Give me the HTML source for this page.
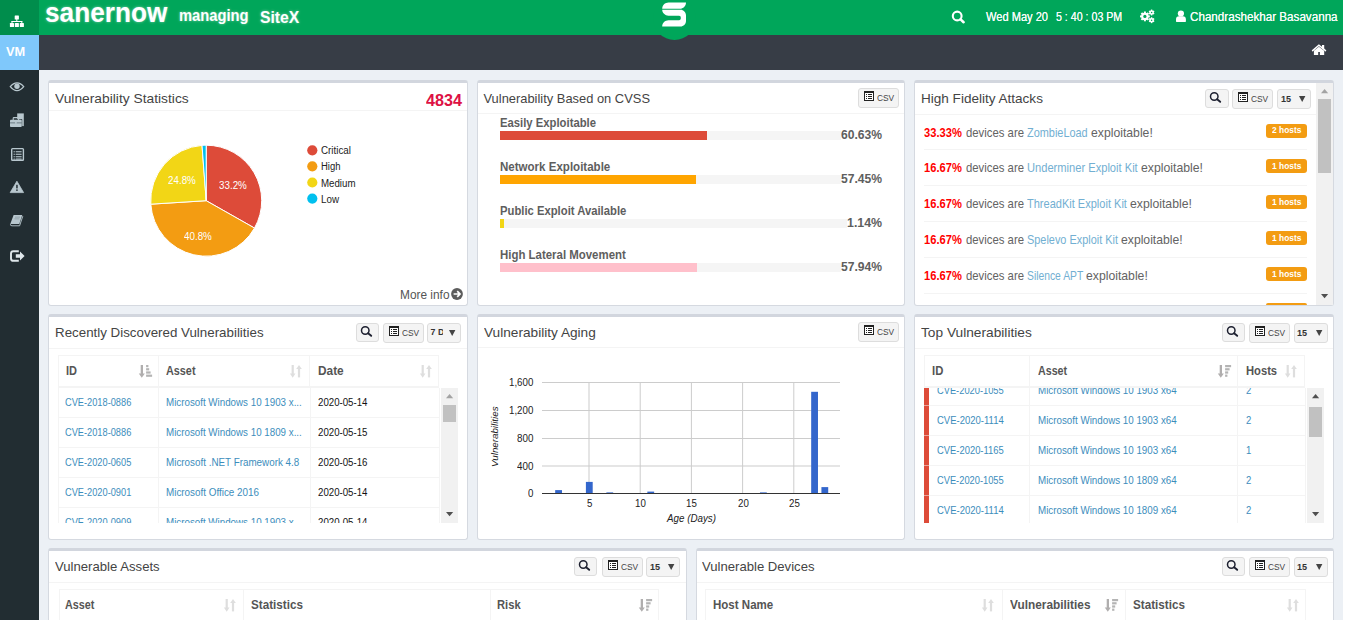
<!DOCTYPE html>
<html lang="en"><head><meta charset="utf-8"><title>SanerNow - Vulnerability Management</title>
<style>
html,body{margin:0;padding:0;}
body{width:1345px;height:620px;overflow:hidden;background:#fff;position:relative;font-family:"Liberation Sans",sans-serif;}
div,span.t,svg{position:absolute;box-sizing:border-box;}
svg{overflow:visible;}
.t{white-space:nowrap;line-height:1;transform-origin:0 0;display:block;}
.box{background:#fff;border:1px solid #d5d9e0;border-top:3px solid #d2d6de;border-radius:3px;}
.btn{background:#f4f4f4;border:1px solid #ddd;border-radius:3px;}
.clip{overflow:hidden;}
</style></head>
<body>
<div style="left:0px;top:0px;width:1343px;height:620px;background:#ecf0f5"></div>
<div style="left:0px;top:0px;width:39px;height:620px;background:#222d32"></div>
<div style="left:39px;top:0px;width:1304px;height:35px;background:#00a65a"></div>
<div style="left:0px;top:0px;width:39px;height:35px;background:#008d4c"></div>
<div style="left:39px;top:35px;width:1304px;height:35px;background:#373d46"></div>
<div style="left:0px;top:35px;width:39px;height:35px;background:#7fc8fb"></div>
<div style="left:653px;top:-3px;width:43px;height:43px;background:#00a65a;border-radius:50%"></div>
<span class="t" style="left:45.30px;top:-1.10px;font-size:28.00px;color:#fff;font-weight:bold;transform:scaleX(0.9357);text-shadow:0 0 3px rgba(255,255,255,.5);">sanernow</span>
<span class="t" style="left:178.80px;top:7.31px;font-size:17.00px;color:#fff;font-weight:bold;transform:scaleX(0.8655);text-shadow:0 0 3px rgba(255,255,255,.5);">managing</span>
<span class="t" style="left:260.00px;top:8.91px;font-size:17.00px;color:#fff;font-weight:bold;transform:scaleX(0.9240);text-shadow:0 0 3px rgba(255,255,255,.5);">SiteX</span>
<span class="t" style="left:6.30px;top:45.00px;font-size:13.00px;color:#fff;font-weight:bold;transform:scaleX(0.9846);">VM</span>
<span class="t" style="left:985.80px;top:10.00px;font-size:13.00px;color:#f4fbf7;transform:scaleX(0.8522);text-shadow:0 0 0.6px #fff;">Wed May 20</span>
<span class="t" style="left:1056.00px;top:10.00px;font-size:13.00px;color:#f4fbf7;transform:scaleX(0.8179);text-shadow:0 0 0.6px #fff;">5 : 40 : 03 PM</span>
<span class="t" style="left:1189.80px;top:10.00px;font-size:13.00px;color:#f4fbf7;transform:scaleX(0.8957);text-shadow:0 0 0.6px #fff;">Chandrashekhar Basavanna</span>
<div class="box" style="left:48px;top:80px;width:420px;height:226px;"></div><div style="left:49px;top:110px;width:418px;height:1px;background:#f4f4f4"></div>
<div class="box" style="left:477px;top:80px;width:428px;height:226px;"></div><div style="left:478px;top:113px;width:426px;height:1px;background:#f4f4f4"></div>
<div class="box" style="left:914px;top:80px;width:420px;height:226px;"></div><div style="left:915px;top:114px;width:418px;height:1px;background:#f4f4f4"></div>
<div class="box" style="left:48px;top:314px;width:420px;height:226px;"></div><div style="left:49px;top:347.5px;width:418px;height:1px;background:#f4f4f4"></div>
<div class="box" style="left:477px;top:314px;width:428px;height:226px;"></div><div style="left:478px;top:347px;width:426px;height:1px;background:#f4f4f4"></div>
<div class="box" style="left:914px;top:314px;width:420px;height:226px;"></div><div style="left:915px;top:348px;width:418px;height:1px;background:#f4f4f4"></div>
<div class="box" style="left:48px;top:548px;width:639px;height:100px;"></div><div style="left:49px;top:582px;width:637px;height:1px;background:#f4f4f4"></div>
<div class="box" style="left:696px;top:548px;width:638px;height:100px;"></div><div style="left:697px;top:582px;width:636px;height:1px;background:#f4f4f4"></div>
<span class="t" style="left:54.50px;top:92.88px;font-size:12.90px;color:#444;transform:scaleX(1.0704);">Vulnerability Statistics</span>
<span class="t" style="left:483.50px;top:92.88px;font-size:12.90px;color:#444;">Vulnerability Based on CVSS</span>
<span class="t" style="left:921.20px;top:92.88px;font-size:12.90px;color:#444;transform:scaleX(1.0503);">High Fidelity Attacks</span>
<span class="t" style="left:55.20px;top:326.88px;font-size:12.90px;color:#444;transform:scaleX(1.0348);">Recently Discovered Vulnerabilities</span>
<span class="t" style="left:483.50px;top:326.88px;font-size:12.90px;color:#444;transform:scaleX(1.0588);">Vulnerability Aging</span>
<span class="t" style="left:921.20px;top:326.88px;font-size:12.90px;color:#444;transform:scaleX(1.0639);">Top Vulnerabilities</span>
<span class="t" style="left:54.50px;top:560.98px;font-size:12.90px;color:#444;transform:scaleX(1.0193);">Vulnerable Assets</span>
<span class="t" style="left:702.10px;top:560.98px;font-size:12.90px;color:#444;transform:scaleX(1.0172);">Vulnerable Devices</span>
<span class="t" style="left:425.80px;top:93.19px;font-size:15.60px;color:#dd1144;font-weight:bold;transform:scaleX(1.0374);">4834</span>
<svg style="left:0;top:0" width="470" height="310" viewBox="0 0 470 310"><path d="M206.20 200.70 L206.20 145.20 A55.50 55.50 0 0 1 254.50 228.05 Z" fill="#dd4b39" stroke="#fff" stroke-width="1"/><path d="M206.20 200.70 L254.50 228.05 A55.50 55.50 0 0 1 150.81 204.18 Z" fill="#f39c12" stroke="#fff" stroke-width="1"/><path d="M206.20 200.70 L150.81 204.18 A55.50 55.50 0 0 1 202.02 145.36 Z" fill="#f2d616" stroke="#fff" stroke-width="1"/><path d="M206.20 200.70 L202.02 145.36 A55.50 55.50 0 0 1 206.20 145.20 Z" fill="#00c0ef" stroke="#fff" stroke-width="1"/><circle cx="312.3" cy="150.3" r="5.1" fill="#dd4b39"/><circle cx="312.3" cy="166.3" r="5.1" fill="#f39c12"/><circle cx="312.3" cy="182.5" r="5.1" fill="#f2d616"/><circle cx="312.3" cy="198.6" r="5.1" fill="#00c0ef"/></svg>
<span class="t" style="left:219.30px;top:181.13px;font-size:10.00px;color:#fff;transform:scaleX(0.9803);">33.2%</span>
<span class="t" style="left:168.10px;top:176.23px;font-size:10.00px;color:#fff;transform:scaleX(0.9803);">24.8%</span>
<span class="t" style="left:184.30px;top:232.13px;font-size:10.00px;color:#fff;transform:scaleX(0.9803);">40.8%</span>
<span class="t" style="left:320.60px;top:146.23px;font-size:10.00px;color:#222;transform:scaleX(0.9816);">Critical</span>
<span class="t" style="left:320.60px;top:162.23px;font-size:10.00px;color:#222;transform:scaleX(0.9476);">High</span>
<span class="t" style="left:320.60px;top:178.53px;font-size:10.00px;color:#222;transform:scaleX(0.9697);">Medium</span>
<span class="t" style="left:320.60px;top:194.63px;font-size:10.00px;color:#222;transform:scaleX(0.9804);">Low</span>
<span class="t" style="left:399.50px;top:288.50px;font-size:12.40px;color:#555;transform:scaleX(0.9583);">More info</span>
<svg style="left:451px;top:288.4px;" width="12" height="12" viewBox="0 0 12 12"><circle cx="6" cy="6" r="5.9" fill="#5c5c5c"/><path d="M2.6 6 H8.6 M6.2 3.2 L9 6 L6.2 8.8" stroke="#fff" stroke-width="1.7" fill="none" stroke-linejoin="miter"/></svg>
<div class="btn" style="left:858.4px;top:88.1px;width:40.5px;height:19.5px;"></div><svg style="left:864px;top:91px;shape-rendering:crispEdges;" width="10" height="10" viewBox="0 0 10 10"><rect x="0" y="0" width="10" height="10" fill="#222"/><rect x="1" y="2" width="8" height="7" fill="#fff"/><rect x="2" y="3" width="1" height="1" fill="#222"/><rect x="4" y="3" width="4" height="1" fill="#222"/><rect x="2" y="5" width="1" height="1" fill="#222"/><rect x="4" y="5" width="4" height="1" fill="#222"/><rect x="2" y="7" width="1" height="1" fill="#222"/><rect x="4" y="7" width="4" height="1" fill="#222"/></svg><span class="t" style="left:876.80px;top:92.62px;font-size:9.90px;color:#444;transform:scaleX(0.8468);">CSV</span>
<span class="t" style="left:500.20px;top:117.30px;font-size:12.40px;color:#5e5e5e;font-weight:bold;transform:scaleX(0.9110);">Easily Exploitable</span>
<div style="left:500px;top:131px;width:341px;height:9px;background:#f5f5f5"></div>
<div style="left:500px;top:131px;width:207px;height:9px;background:#dd4b39"></div>
<span class="t" style="left:841.00px;top:127.80px;font-size:13.00px;color:#5e5e5e;font-weight:bold;transform:scaleX(0.9321);">60.63%</span>
<span class="t" style="left:500.20px;top:161.30px;font-size:12.40px;color:#5e5e5e;font-weight:bold;transform:scaleX(0.9313);">Network Exploitable</span>
<div style="left:500px;top:175px;width:341px;height:9px;background:#f5f5f5"></div>
<div style="left:500px;top:175px;width:196px;height:9px;background:#ffa500"></div>
<span class="t" style="left:841.00px;top:171.80px;font-size:13.00px;color:#5e5e5e;font-weight:bold;transform:scaleX(0.9321);">57.45%</span>
<span class="t" style="left:500.20px;top:205.30px;font-size:12.40px;color:#5e5e5e;font-weight:bold;transform:scaleX(0.9096);">Public Exploit Available</span>
<div style="left:500px;top:219px;width:347px;height:9px;background:#f5f5f5"></div>
<div style="left:500px;top:219px;width:4px;height:9px;background:#f2d616"></div>
<span class="t" style="left:847.00px;top:215.80px;font-size:13.00px;color:#5e5e5e;font-weight:bold;transform:scaleX(0.9519);">1.14%</span>
<span class="t" style="left:500.20px;top:249.30px;font-size:12.40px;color:#5e5e5e;font-weight:bold;transform:scaleX(0.9228);">High Lateral Movement</span>
<div style="left:500px;top:263px;width:341px;height:9px;background:#f5f5f5"></div>
<div style="left:500px;top:263px;width:197px;height:9px;background:#ffc0cb"></div>
<span class="t" style="left:841.00px;top:259.80px;font-size:13.00px;color:#5e5e5e;font-weight:bold;transform:scaleX(0.9321);">57.94%</span>
<div class="btn" style="left:1205.2px;top:89.1px;width:23.4px;height:18.8px;"></div><svg style="left:1205.2px;top:89.1px;" width="23" height="18" viewBox="0 0 23 18"><circle cx="9.25" cy="7.45" r="3.75" fill="none" stroke="#1d2030" stroke-width="1.5"/><path d="M12.1 10.2 L15.2 12.8" stroke="#1d2030" stroke-width="1.9" stroke-linecap="round"/></svg>
<div class="btn" style="left:1232.3px;top:89.1px;width:40.5px;height:19.5px;"></div><svg style="left:1238px;top:92px;shape-rendering:crispEdges;" width="10" height="10" viewBox="0 0 10 10"><rect x="0" y="0" width="10" height="10" fill="#222"/><rect x="1" y="2" width="8" height="7" fill="#fff"/><rect x="2" y="3" width="1" height="1" fill="#222"/><rect x="4" y="3" width="4" height="1" fill="#222"/><rect x="2" y="5" width="1" height="1" fill="#222"/><rect x="4" y="5" width="4" height="1" fill="#222"/><rect x="2" y="7" width="1" height="1" fill="#222"/><rect x="4" y="7" width="4" height="1" fill="#222"/></svg><span class="t" style="left:1250.70px;top:93.62px;font-size:9.90px;color:#444;transform:scaleX(0.8468);">CSV</span>
<div class="btn" style="left:1277.4px;top:89.1px;width:33.4px;height:19.6px;"></div><span class="t" style="left:1280.50px;top:94.58px;font-size:9.00px;color:#333;font-weight:bold;transform:scaleX(1.0084);">15</span><svg style="left:1298.9px;top:95.8px;" width="6.4" height="6" viewBox="0 0 6.4 6"><path d="M0 0 H6.4 L3.2 6 Z" fill="#444"/></svg>
<div style="left:1316px;top:83px;width:17px;height:222px;background:#f1f1f1"></div><div style="left:1318px;top:99px;width:13px;height:74px;background:#c1c1c1"></div><svg style="left:1320.9px;top:89px;" width="7.2" height="4.2" viewBox="0 0 7.2 4.2"><path d="M0 4.2 L3.6 0 L7.2 4.2 Z" fill="#a3a3a3"/></svg><svg style="left:1320.9px;top:293.6px;" width="7.2" height="4.2" viewBox="0 0 7.2 4.2"><path d="M0 0 L3.6 4.2 L7.2 0 Z" fill="#505050"/></svg>
<span class="t" style="left:924.20px;top:126.80px;font-size:12.40px;color:#f00;font-weight:bold;transform:scaleX(0.8993);">33.33%</span>
<span class="t" style="left:965.50px;top:126.63px;font-size:12.60px;color:#636363;transform:scaleX(0.9005);">devices are</span>
<span class="t" style="left:1026.80px;top:126.63px;font-size:12.60px;color:#72afd2;transform:scaleX(0.8669);">ZombieLoad</span>
<span class="t" style="left:1090.70px;top:126.63px;font-size:12.60px;color:#636363;transform:scaleX(0.9699);">exploitable!</span>
<div style="left:924px;top:149px;width:383px;height:1px;background:#f4f4f4"></div>
<div style="left:1266px;top:124px;width:41px;height:13.5px;background:#f39c12;border-radius:3px"></div>
<span class="t" style="left:1271.60px;top:126.02px;font-size:8.60px;color:#fff;font-weight:bold;transform:scaleX(0.9803);">2 hosts</span>
<span class="t" style="left:924.20px;top:162.00px;font-size:12.40px;color:#f00;font-weight:bold;transform:scaleX(0.8993);">16.67%</span>
<span class="t" style="left:965.50px;top:161.83px;font-size:12.60px;color:#636363;transform:scaleX(0.9005);">devices are</span>
<span class="t" style="left:1026.80px;top:161.83px;font-size:12.60px;color:#72afd2;transform:scaleX(0.8835);">Underminer Exploit Kit</span>
<span class="t" style="left:1140.70px;top:161.83px;font-size:12.60px;color:#636363;transform:scaleX(0.9730);">exploitable!</span>
<div style="left:924px;top:185px;width:383px;height:1px;background:#f4f4f4"></div>
<div style="left:1266px;top:159.3px;width:41px;height:13.5px;background:#f39c12;border-radius:3px"></div>
<span class="t" style="left:1271.60px;top:161.62px;font-size:8.60px;color:#fff;font-weight:bold;transform:scaleX(0.9803);">1 hosts</span>
<span class="t" style="left:924.20px;top:198.00px;font-size:12.40px;color:#f00;font-weight:bold;transform:scaleX(0.8993);">16.67%</span>
<span class="t" style="left:965.50px;top:197.83px;font-size:12.60px;color:#636363;transform:scaleX(0.9005);">devices are</span>
<span class="t" style="left:1026.80px;top:197.83px;font-size:12.60px;color:#72afd2;transform:scaleX(0.8755);">ThreadKit Exploit Kit</span>
<span class="t" style="left:1129.90px;top:197.83px;font-size:12.60px;color:#636363;transform:scaleX(0.9715);">exploitable!</span>
<div style="left:924px;top:221px;width:383px;height:1px;background:#f4f4f4"></div>
<div style="left:1266px;top:195.3px;width:41px;height:13.5px;background:#f39c12;border-radius:3px"></div>
<span class="t" style="left:1271.60px;top:197.62px;font-size:8.60px;color:#fff;font-weight:bold;transform:scaleX(0.9803);">1 hosts</span>
<span class="t" style="left:924.20px;top:234.00px;font-size:12.40px;color:#f00;font-weight:bold;transform:scaleX(0.8993);">16.67%</span>
<span class="t" style="left:965.50px;top:233.83px;font-size:12.60px;color:#636363;transform:scaleX(0.9005);">devices are</span>
<span class="t" style="left:1026.80px;top:233.83px;font-size:12.60px;color:#72afd2;transform:scaleX(0.8665);">Spelevo Exploit Kit</span>
<span class="t" style="left:1121.00px;top:233.83px;font-size:12.60px;color:#636363;transform:scaleX(0.9683);">exploitable!</span>
<div style="left:924px;top:257px;width:383px;height:1px;background:#f4f4f4"></div>
<div style="left:1266px;top:231.3px;width:41px;height:13.5px;background:#f39c12;border-radius:3px"></div>
<span class="t" style="left:1271.60px;top:233.62px;font-size:8.60px;color:#fff;font-weight:bold;transform:scaleX(0.9803);">1 hosts</span>
<span class="t" style="left:924.20px;top:270.00px;font-size:12.40px;color:#f00;font-weight:bold;transform:scaleX(0.8993);">16.67%</span>
<span class="t" style="left:965.50px;top:269.83px;font-size:12.60px;color:#636363;transform:scaleX(0.9005);">devices are</span>
<span class="t" style="left:1026.80px;top:269.83px;font-size:12.60px;color:#72afd2;transform:scaleX(0.8191);">Silence APT</span>
<span class="t" style="left:1086.20px;top:269.83px;font-size:12.60px;color:#636363;transform:scaleX(0.9699);">exploitable!</span>
<div style="left:924px;top:293px;width:383px;height:1px;background:#f4f4f4"></div>
<div style="left:1266px;top:267.3px;width:41px;height:13.5px;background:#f39c12;border-radius:3px"></div>
<span class="t" style="left:1271.60px;top:269.62px;font-size:8.60px;color:#fff;font-weight:bold;transform:scaleX(0.9803);">1 hosts</span>
<div style="left:1266px;top:303.3px;width:41px;height:1.7px;background:#f39c12;border-radius:3px 3px 0 0"></div>
<div class="btn" style="left:356px;top:323.1px;width:23.4px;height:18.8px;"></div><svg style="left:356px;top:323.1px;" width="23" height="18" viewBox="0 0 23 18"><circle cx="9.25" cy="7.45" r="3.75" fill="none" stroke="#1d2030" stroke-width="1.5"/><path d="M12.1 10.2 L15.2 12.8" stroke="#1d2030" stroke-width="1.9" stroke-linecap="round"/></svg>
<div class="btn" style="left:383.2px;top:323.1px;width:40.5px;height:19.5px;"></div><svg style="left:389px;top:326px;shape-rendering:crispEdges;" width="10" height="10" viewBox="0 0 10 10"><rect x="0" y="0" width="10" height="10" fill="#222"/><rect x="1" y="2" width="8" height="7" fill="#fff"/><rect x="2" y="3" width="1" height="1" fill="#222"/><rect x="4" y="3" width="4" height="1" fill="#222"/><rect x="2" y="5" width="1" height="1" fill="#222"/><rect x="4" y="5" width="4" height="1" fill="#222"/><rect x="2" y="7" width="1" height="1" fill="#222"/><rect x="4" y="7" width="4" height="1" fill="#222"/></svg><span class="t" style="left:401.60px;top:327.62px;font-size:9.90px;color:#444;transform:scaleX(0.8468);">CSV</span>
<div class="btn" style="left:427.4px;top:323.1px;width:33.4px;height:19.6px;"></div><div class="clip" style="left:427.4px;top:323.1px;width:15.7px;height:19.6px;"><span class="t" style="left:3.20px;top:5.25px;font-size:8.80px;color:#333;font-weight:bold;">7 D</span></div><svg style="left:448.9px;top:329.8px;" width="6.4" height="6" viewBox="0 0 6.4 6"><path d="M0 0 H6.4 L3.2 6 Z" fill="#444"/></svg>
<div style="left:58.3px;top:355px;width:380.7px;height:33px;border:1px solid #f4f4f4;border-bottom:2px solid #f4f4f4;background:#fff"></div><div style="left:158px;top:355px;width:1px;height:31.5px;background:#f4f4f4"></div><div style="left:309px;top:355px;width:1px;height:31.5px;background:#f4f4f4"></div><span class="t" style="left:65.50px;top:365.47px;font-size:12.20px;color:#555;font-weight:bold;transform:scaleX(0.9026);">ID</span><svg style="left:138.5px;top:365px;" width="13" height="13" viewBox="0 0 13 13"><rect x="1.7" y="0" width="2.3" height="9.2" fill="#b0aeae"/><path d="M-0.2 8.6 H5.8 L2.8 12.7 Z" fill="#b0aeae"/><rect x="7.1" y="0" width="2.3" height="2.2" fill="#b4b4b4"/><rect x="7.1" y="3.2" width="3.1" height="2.2" fill="#b4b4b4"/><rect x="7.1" y="6.4" width="4.5" height="2.2" fill="#b4b4b4"/><rect x="7.1" y="9.6" width="6" height="2.2" fill="#b4b4b4"/></svg><span class="t" style="left:166.10px;top:365.47px;font-size:12.20px;color:#555;font-weight:bold;transform:scaleX(0.8885);">Asset</span><svg style="left:289.8px;top:365px;" width="12" height="13" viewBox="0 0 12 13"><rect x="1.6" y="0" width="2.2" height="9.2" fill="#dedede"/><path d="M-0.1 8.6 H5.5 L2.7 12.7 Z" fill="#dedede"/><rect x="7.9" y="3.6" width="2.2" height="8.8" fill="#dedede"/><path d="M6.2 4.1 H11.8 L9 0 Z" fill="#dedede"/></svg><span class="t" style="left:317.50px;top:365.47px;font-size:12.20px;color:#555;font-weight:bold;transform:scaleX(0.9727);">Date</span><svg style="left:419.5px;top:365px;" width="12" height="13" viewBox="0 0 12 13"><rect x="1.6" y="0" width="2.2" height="9.2" fill="#dedede"/><path d="M-0.1 8.6 H5.5 L2.7 12.7 Z" fill="#dedede"/><rect x="7.9" y="3.6" width="2.2" height="8.8" fill="#dedede"/><path d="M6.2 4.1 H11.8 L9 0 Z" fill="#dedede"/></svg>
<div class="clip" style="left:58.3px;top:388px;width:382.5px;height:135px;"><span class="t" style="left:7.20px;top:9.77px;font-size:10.20px;color:#3c8dbc;transform:scaleX(0.9074);">CVE-2018-0886</span><span class="t" style="left:108.20px;top:9.77px;font-size:10.20px;color:#3c8dbc;transform:scaleX(0.9593);">Microsoft Windows 10 1903 x...</span><span class="t" style="left:259.60px;top:9.77px;font-size:10.20px;color:#111;transform:scaleX(0.9496);">2020-05-14</span><div style="left:0px;top:29px;width:381.5px;height:1px;background:#f4f4f4"></div><span class="t" style="left:7.20px;top:39.77px;font-size:10.20px;color:#3c8dbc;transform:scaleX(0.9074);">CVE-2018-0886</span><span class="t" style="left:108.20px;top:39.77px;font-size:10.20px;color:#3c8dbc;transform:scaleX(0.9593);">Microsoft Windows 10 1809 x...</span><span class="t" style="left:259.60px;top:39.77px;font-size:10.20px;color:#111;transform:scaleX(0.9496);">2020-05-15</span><div style="left:0px;top:59px;width:381.5px;height:1px;background:#f4f4f4"></div><span class="t" style="left:7.20px;top:69.77px;font-size:10.20px;color:#3c8dbc;transform:scaleX(0.9074);">CVE-2020-0605</span><span class="t" style="left:108.20px;top:69.77px;font-size:10.20px;color:#3c8dbc;transform:scaleX(0.9663);">Microsoft .NET Framework 4.8</span><span class="t" style="left:259.60px;top:69.77px;font-size:10.20px;color:#111;transform:scaleX(0.9496);">2020-05-16</span><div style="left:0px;top:89px;width:381.5px;height:1px;background:#f4f4f4"></div><span class="t" style="left:7.20px;top:99.77px;font-size:10.20px;color:#3c8dbc;transform:scaleX(0.9074);">CVE-2020-0901</span><span class="t" style="left:108.20px;top:99.77px;font-size:10.20px;color:#3c8dbc;transform:scaleX(0.9680);">Microsoft Office 2016</span><span class="t" style="left:259.60px;top:99.77px;font-size:10.20px;color:#111;transform:scaleX(0.9496);">2020-05-14</span><div style="left:0px;top:119px;width:381.5px;height:1px;background:#f4f4f4"></div><span class="t" style="left:7.20px;top:129.77px;font-size:10.20px;color:#3c8dbc;transform:scaleX(0.9074);">CVE-2020-0909</span><span class="t" style="left:108.20px;top:129.77px;font-size:10.20px;color:#3c8dbc;transform:scaleX(0.9593);">Microsoft Windows 10 1903 x...</span><span class="t" style="left:259.60px;top:129.77px;font-size:10.20px;color:#111;transform:scaleX(0.9496);">2020-05-14</span><div style="left:0px;top:149px;width:381.5px;height:1px;background:#f4f4f4"></div><div style="left:0px;top:0px;width:1px;height:140px;background:#f4f4f4"></div><div style="left:100.2px;top:0px;width:1px;height:140px;background:#f4f4f4"></div><div style="left:252px;top:0px;width:1px;height:140px;background:#f4f4f4"></div><div style="left:381px;top:0px;width:1px;height:140px;background:#f4f4f4"></div></div>
<div style="left:441px;top:388px;width:17px;height:135px;background:#f1f1f1"></div><div style="left:443px;top:405px;width:13px;height:16.7px;background:#c1c1c1"></div><svg style="left:445.9px;top:394px;" width="7.2" height="4.2" viewBox="0 0 7.2 4.2"><path d="M0 4.2 L3.6 0 L7.2 4.2 Z" fill="#a3a3a3"/></svg><svg style="left:445.9px;top:511.6px;" width="7.2" height="4.2" viewBox="0 0 7.2 4.2"><path d="M0 0 L3.6 4.2 L7.2 0 Z" fill="#505050"/></svg>
<div class="btn" style="left:858.4px;top:322.1px;width:40.5px;height:19.5px;"></div><svg style="left:864px;top:325px;shape-rendering:crispEdges;" width="10" height="10" viewBox="0 0 10 10"><rect x="0" y="0" width="10" height="10" fill="#222"/><rect x="1" y="2" width="8" height="7" fill="#fff"/><rect x="2" y="3" width="1" height="1" fill="#222"/><rect x="4" y="3" width="4" height="1" fill="#222"/><rect x="2" y="5" width="1" height="1" fill="#222"/><rect x="4" y="5" width="4" height="1" fill="#222"/><rect x="2" y="7" width="1" height="1" fill="#222"/><rect x="4" y="7" width="4" height="1" fill="#222"/></svg><span class="t" style="left:876.80px;top:326.62px;font-size:9.90px;color:#444;transform:scaleX(0.8468);">CSV</span>
<svg style="left:477px;top:340px" width="428" height="198" viewBox="477 340 428 198"><rect x="542" y="382" width="298" height="1" fill="#ccc"/><rect x="542" y="410" width="298" height="1" fill="#ccc"/><rect x="542" y="438" width="298" height="1" fill="#ccc"/><rect x="542" y="465.5" width="298" height="1" fill="#ccc"/><rect x="588.5" y="382" width="1" height="111.5" fill="#ccc"/><rect x="639.7" y="382" width="1" height="111.5" fill="#ccc"/><rect x="690.9" y="382" width="1" height="111.5" fill="#ccc"/><rect x="742.1" y="382" width="1" height="111.5" fill="#ccc"/><rect x="793.3" y="382" width="1" height="111.5" fill="#ccc"/><rect x="555.18" y="490.10" width="6.8" height="3.50" fill="#3366cc"/><rect x="585.90" y="481.90" width="6.8" height="11.70" fill="#3366cc"/><rect x="606.38" y="492.40" width="6.8" height="1.20" fill="#3366cc"/><rect x="647.34" y="491.60" width="6.8" height="2.00" fill="#3366cc"/><rect x="759.98" y="492.40" width="6.8" height="1.20" fill="#3366cc"/><rect x="811.18" y="391.80" width="6.8" height="101.80" fill="#3366cc"/><rect x="821.42" y="487.10" width="6.8" height="6.50" fill="#3366cc"/><rect x="542" y="493" width="298" height="1" fill="#333"/></svg>
<span class="t" style="left:509.00px;top:378.24px;font-size:10.00px;color:#222;transform:scaleX(0.9708);">1,600</span>
<span class="t" style="left:509.00px;top:406.24px;font-size:10.00px;color:#222;transform:scaleX(0.9708);">1,200</span>
<span class="t" style="left:516.90px;top:434.24px;font-size:10.00px;color:#222;transform:scaleX(0.9828);">800</span>
<span class="t" style="left:516.90px;top:461.74px;font-size:10.00px;color:#222;transform:scaleX(0.9828);">400</span>
<span class="t" style="left:527.90px;top:489.24px;font-size:10.00px;color:#222;transform:scaleX(0.9708);">0</span>
<span class="t" style="left:586.70px;top:498.74px;font-size:10.00px;color:#222;transform:scaleX(0.9708);">5</span>
<span class="t" style="left:635.20px;top:498.74px;font-size:10.00px;color:#222;transform:scaleX(0.9708);">10</span>
<span class="t" style="left:686.40px;top:498.74px;font-size:10.00px;color:#222;transform:scaleX(0.9708);">15</span>
<span class="t" style="left:737.60px;top:498.74px;font-size:10.00px;color:#222;transform:scaleX(0.9708);">20</span>
<span class="t" style="left:788.80px;top:498.74px;font-size:10.00px;color:#222;transform:scaleX(0.9708);">25</span>
<span class="t" style="left:667.00px;top:513.74px;font-size:10.00px;color:#222;font-style:italic;transform:scaleX(0.9797);">Age (Days)</span>
<span class="t" style="left:490px;top:467.3px;font-size:9.4px;color:#222;font-style:italic;transform-origin:0 0;transform:rotate(-90deg) scaleX(1.04);">Vulnerabilities</span>
<div class="btn" style="left:1222px;top:323.1px;width:23.4px;height:18.8px;"></div><svg style="left:1222px;top:323.1px;" width="23" height="18" viewBox="0 0 23 18"><circle cx="9.25" cy="7.45" r="3.75" fill="none" stroke="#1d2030" stroke-width="1.5"/><path d="M12.1 10.2 L15.2 12.8" stroke="#1d2030" stroke-width="1.9" stroke-linecap="round"/></svg>
<div class="btn" style="left:1249.2px;top:323.1px;width:40.5px;height:19.5px;"></div><svg style="left:1255px;top:326px;shape-rendering:crispEdges;" width="10" height="10" viewBox="0 0 10 10"><rect x="0" y="0" width="10" height="10" fill="#222"/><rect x="1" y="2" width="8" height="7" fill="#fff"/><rect x="2" y="3" width="1" height="1" fill="#222"/><rect x="4" y="3" width="4" height="1" fill="#222"/><rect x="2" y="5" width="1" height="1" fill="#222"/><rect x="4" y="5" width="4" height="1" fill="#222"/><rect x="2" y="7" width="1" height="1" fill="#222"/><rect x="4" y="7" width="4" height="1" fill="#222"/></svg><span class="t" style="left:1267.60px;top:327.62px;font-size:9.90px;color:#444;transform:scaleX(0.8468);">CSV</span>
<div class="btn" style="left:1294.3px;top:323.1px;width:33.4px;height:19.6px;"></div><span class="t" style="left:1297.40px;top:328.58px;font-size:9.00px;color:#333;font-weight:bold;transform:scaleX(1.0084);">15</span><svg style="left:1315.8px;top:329.8px;" width="6.4" height="6" viewBox="0 0 6.4 6"><path d="M0 0 H6.4 L3.2 6 Z" fill="#444"/></svg>
<div style="left:924.3px;top:355px;width:380.7px;height:33px;border:1px solid #f4f4f4;border-bottom:2px solid #f4f4f4;background:#fff"></div><div style="left:1029.3px;top:355px;width:1px;height:31.5px;background:#f4f4f4"></div><div style="left:1237.2px;top:355px;width:1px;height:31.5px;background:#f4f4f4"></div><span class="t" style="left:931.80px;top:365.47px;font-size:12.20px;color:#555;font-weight:bold;transform:scaleX(0.9272);">ID</span><span class="t" style="left:1037.70px;top:365.47px;font-size:12.20px;color:#555;font-weight:bold;transform:scaleX(0.8764);">Asset</span><svg style="left:1217.8px;top:365px;" width="13" height="13" viewBox="0 0 13 13"><rect x="1.7" y="0" width="2.3" height="9.2" fill="#b0aeae"/><path d="M-0.2 8.6 H5.8 L2.8 12.7 Z" fill="#b0aeae"/><rect x="7.1" y="0" width="6" height="2.2" fill="#b4b4b4"/><rect x="7.1" y="3.2" width="4.5" height="2.2" fill="#b4b4b4"/><rect x="7.1" y="6.4" width="3.1" height="2.2" fill="#b4b4b4"/><rect x="7.1" y="9.6" width="2.3" height="2.2" fill="#b4b4b4"/></svg><span class="t" style="left:1245.70px;top:365.47px;font-size:12.20px;color:#555;font-weight:bold;transform:scaleX(0.9181);">Hosts</span><svg style="left:1285px;top:365px;" width="12" height="13" viewBox="0 0 12 13"><rect x="1.6" y="0" width="2.2" height="9.2" fill="#dedede"/><path d="M-0.1 8.6 H5.5 L2.7 12.7 Z" fill="#dedede"/><rect x="7.9" y="3.6" width="2.2" height="8.8" fill="#dedede"/><path d="M6.2 4.1 H11.8 L9 0 Z" fill="#dedede"/></svg>
<div class="clip" style="left:924.3px;top:388px;width:382.5px;height:135px;"><span class="t" style="left:12.80px;top:-2.33px;font-size:10.20px;color:#3c8dbc;transform:scaleX(0.9129);">CVE-2020-1055</span><span class="t" style="left:113.70px;top:-2.33px;font-size:10.20px;color:#3c8dbc;transform:scaleX(0.9605);">Microsoft Windows 10 1903 x64</span><span class="t" style="left:321.40px;top:-2.33px;font-size:10.20px;color:#3c8dbc;transform:scaleX(0.9344);">2</span><div style="left:0px;top:17px;width:381.5px;height:1px;background:#f4f4f4"></div><span class="t" style="left:12.80px;top:27.67px;font-size:10.20px;color:#3c8dbc;transform:scaleX(0.9323);">CVE-2020-1114</span><span class="t" style="left:113.70px;top:27.67px;font-size:10.20px;color:#3c8dbc;transform:scaleX(0.9605);">Microsoft Windows 10 1903 x64</span><span class="t" style="left:321.40px;top:27.67px;font-size:10.20px;color:#3c8dbc;transform:scaleX(0.9344);">2</span><div style="left:0px;top:47px;width:381.5px;height:1px;background:#f4f4f4"></div><span class="t" style="left:12.80px;top:57.67px;font-size:10.20px;color:#3c8dbc;transform:scaleX(0.9224);">CVE-2020-1165</span><span class="t" style="left:113.70px;top:57.67px;font-size:10.20px;color:#3c8dbc;transform:scaleX(0.9605);">Microsoft Windows 10 1903 x64</span><span class="t" style="left:321.40px;top:57.67px;font-size:10.20px;color:#3c8dbc;transform:scaleX(0.9344);">1</span><div style="left:0px;top:77px;width:381.5px;height:1px;background:#f4f4f4"></div><span class="t" style="left:12.80px;top:87.67px;font-size:10.20px;color:#3c8dbc;transform:scaleX(0.9129);">CVE-2020-1055</span><span class="t" style="left:113.70px;top:87.67px;font-size:10.20px;color:#3c8dbc;transform:scaleX(0.9605);">Microsoft Windows 10 1809 x64</span><span class="t" style="left:321.40px;top:87.67px;font-size:10.20px;color:#3c8dbc;transform:scaleX(0.9344);">2</span><div style="left:0px;top:107px;width:381.5px;height:1px;background:#f4f4f4"></div><span class="t" style="left:12.80px;top:117.67px;font-size:10.20px;color:#3c8dbc;transform:scaleX(0.9323);">CVE-2020-1114</span><span class="t" style="left:113.70px;top:117.67px;font-size:10.20px;color:#3c8dbc;transform:scaleX(0.9605);">Microsoft Windows 10 1809 x64</span><span class="t" style="left:321.40px;top:117.67px;font-size:10.20px;color:#3c8dbc;transform:scaleX(0.9344);">2</span><div style="left:0px;top:137px;width:381.5px;height:1px;background:#f4f4f4"></div><div style="left:0px;top:0px;width:4.7px;height:140px;background:#dd4b39"></div><div style="left:0px;top:17px;width:4.7px;height:1px;background:#e9a49b"></div><div style="left:0px;top:47px;width:4.7px;height:1px;background:#e9a49b"></div><div style="left:0px;top:77px;width:4.7px;height:1px;background:#e9a49b"></div><div style="left:0px;top:107px;width:4.7px;height:1px;background:#e9a49b"></div><div style="left:0px;top:137px;width:4.7px;height:1px;background:#e9a49b"></div><div style="left:105px;top:0px;width:1px;height:140px;background:#f4f4f4"></div><div style="left:313.2px;top:0px;width:1px;height:140px;background:#f4f4f4"></div><div style="left:381px;top:0px;width:1px;height:140px;background:#f4f4f4"></div></div>
<div style="left:1307px;top:388px;width:17px;height:135px;background:#f1f1f1"></div><div style="left:1309px;top:407px;width:13px;height:29.8px;background:#c1c1c1"></div><svg style="left:1311.9px;top:394px;" width="7.2" height="4.2" viewBox="0 0 7.2 4.2"><path d="M0 4.2 L3.6 0 L7.2 4.2 Z" fill="#505050"/></svg><svg style="left:1311.9px;top:511.6px;" width="7.2" height="4.2" viewBox="0 0 7.2 4.2"><path d="M0 0 L3.6 4.2 L7.2 0 Z" fill="#505050"/></svg>
<div class="btn" style="left:573.9px;top:557.1px;width:23.4px;height:18.8px;"></div><svg style="left:573.9px;top:557.1px;" width="23" height="18" viewBox="0 0 23 18"><circle cx="9.25" cy="7.45" r="3.75" fill="none" stroke="#1d2030" stroke-width="1.5"/><path d="M12.1 10.2 L15.2 12.8" stroke="#1d2030" stroke-width="1.9" stroke-linecap="round"/></svg>
<div class="btn" style="left:602.2px;top:557.1px;width:40.5px;height:19.5px;"></div><svg style="left:608px;top:560px;shape-rendering:crispEdges;" width="10" height="10" viewBox="0 0 10 10"><rect x="0" y="0" width="10" height="10" fill="#222"/><rect x="1" y="2" width="8" height="7" fill="#fff"/><rect x="2" y="3" width="1" height="1" fill="#222"/><rect x="4" y="3" width="4" height="1" fill="#222"/><rect x="2" y="5" width="1" height="1" fill="#222"/><rect x="4" y="5" width="4" height="1" fill="#222"/><rect x="2" y="7" width="1" height="1" fill="#222"/><rect x="4" y="7" width="4" height="1" fill="#222"/></svg><span class="t" style="left:620.60px;top:561.62px;font-size:9.90px;color:#444;transform:scaleX(0.8468);">CSV</span>
<div class="btn" style="left:646.4px;top:557.1px;width:33.4px;height:19.6px;"></div><span class="t" style="left:649.50px;top:562.58px;font-size:9.00px;color:#333;font-weight:bold;transform:scaleX(1.0084);">15</span><svg style="left:667.9px;top:563.8px;" width="6.4" height="6" viewBox="0 0 6.4 6"><path d="M0 0 H6.4 L3.2 6 Z" fill="#444"/></svg>
<div style="left:58.5px;top:588.5px;width:600.1px;height:33px;border:1px solid #f4f4f4;border-bottom:2px solid #f4f4f4;background:#fff"></div><div style="left:243.3px;top:588.5px;width:1px;height:31.5px;background:#f4f4f4"></div><div style="left:490px;top:588.5px;width:1px;height:31.5px;background:#f4f4f4"></div><span class="t" style="left:65.10px;top:598.97px;font-size:12.20px;color:#555;font-weight:bold;transform:scaleX(0.8855);">Asset</span><svg style="left:224px;top:598.5px;" width="12" height="13" viewBox="0 0 12 13"><rect x="1.6" y="0" width="2.2" height="9.2" fill="#dedede"/><path d="M-0.1 8.6 H5.5 L2.7 12.7 Z" fill="#dedede"/><rect x="7.9" y="3.6" width="2.2" height="8.8" fill="#dedede"/><path d="M6.2 4.1 H11.8 L9 0 Z" fill="#dedede"/></svg><span class="t" style="left:251.00px;top:598.97px;font-size:12.20px;color:#555;font-weight:bold;transform:scaleX(0.9594);">Statistics</span><span class="t" style="left:497.30px;top:598.97px;font-size:12.20px;color:#555;font-weight:bold;transform:scaleX(0.9165);">Risk</span><svg style="left:638.6px;top:598.5px;" width="13" height="13" viewBox="0 0 13 13"><rect x="1.7" y="0" width="2.3" height="9.2" fill="#b0aeae"/><path d="M-0.2 8.6 H5.8 L2.8 12.7 Z" fill="#b0aeae"/><rect x="7.1" y="0" width="6" height="2.2" fill="#b4b4b4"/><rect x="7.1" y="3.2" width="4.5" height="2.2" fill="#b4b4b4"/><rect x="7.1" y="6.4" width="3.1" height="2.2" fill="#b4b4b4"/><rect x="7.1" y="9.6" width="2.3" height="2.2" fill="#b4b4b4"/></svg>
<div class="btn" style="left:1222px;top:557.1px;width:23.4px;height:18.8px;"></div><svg style="left:1222px;top:557.1px;" width="23" height="18" viewBox="0 0 23 18"><circle cx="9.25" cy="7.45" r="3.75" fill="none" stroke="#1d2030" stroke-width="1.5"/><path d="M12.1 10.2 L15.2 12.8" stroke="#1d2030" stroke-width="1.9" stroke-linecap="round"/></svg>
<div class="btn" style="left:1249.2px;top:557.1px;width:40.5px;height:19.5px;"></div><svg style="left:1255px;top:560px;shape-rendering:crispEdges;" width="10" height="10" viewBox="0 0 10 10"><rect x="0" y="0" width="10" height="10" fill="#222"/><rect x="1" y="2" width="8" height="7" fill="#fff"/><rect x="2" y="3" width="1" height="1" fill="#222"/><rect x="4" y="3" width="4" height="1" fill="#222"/><rect x="2" y="5" width="1" height="1" fill="#222"/><rect x="4" y="5" width="4" height="1" fill="#222"/><rect x="2" y="7" width="1" height="1" fill="#222"/><rect x="4" y="7" width="4" height="1" fill="#222"/></svg><span class="t" style="left:1267.60px;top:561.62px;font-size:9.90px;color:#444;transform:scaleX(0.8468);">CSV</span>
<div class="btn" style="left:1294.3px;top:557.1px;width:33.4px;height:19.6px;"></div><span class="t" style="left:1297.40px;top:562.58px;font-size:9.00px;color:#333;font-weight:bold;transform:scaleX(1.0084);">15</span><svg style="left:1315.8px;top:563.8px;" width="6.4" height="6" viewBox="0 0 6.4 6"><path d="M0 0 H6.4 L3.2 6 Z" fill="#444"/></svg>
<div style="left:705px;top:588.5px;width:600.8px;height:33px;border:1px solid #f4f4f4;border-bottom:2px solid #f4f4f4;background:#fff"></div><div style="left:1001.5px;top:588.5px;width:1px;height:31.5px;background:#f4f4f4"></div><div style="left:1125.1px;top:588.5px;width:1px;height:31.5px;background:#f4f4f4"></div><span class="t" style="left:713.00px;top:598.97px;font-size:12.20px;color:#555;font-weight:bold;transform:scaleX(0.9455);">Host Name</span><svg style="left:982px;top:598.5px;" width="12" height="13" viewBox="0 0 12 13"><rect x="1.6" y="0" width="2.2" height="9.2" fill="#dedede"/><path d="M-0.1 8.6 H5.5 L2.7 12.7 Z" fill="#dedede"/><rect x="7.9" y="3.6" width="2.2" height="8.8" fill="#dedede"/><path d="M6.2 4.1 H11.8 L9 0 Z" fill="#dedede"/></svg><span class="t" style="left:1009.80px;top:598.97px;font-size:12.20px;color:#555;font-weight:bold;transform:scaleX(0.9715);">Vulnerabilities</span><svg style="left:1104.6px;top:598.5px;" width="13" height="13" viewBox="0 0 13 13"><rect x="1.7" y="0" width="2.3" height="9.2" fill="#b0aeae"/><path d="M-0.2 8.6 H5.8 L2.8 12.7 Z" fill="#b0aeae"/><rect x="7.1" y="0" width="6" height="2.2" fill="#b4b4b4"/><rect x="7.1" y="3.2" width="4.5" height="2.2" fill="#b4b4b4"/><rect x="7.1" y="6.4" width="3.1" height="2.2" fill="#b4b4b4"/><rect x="7.1" y="9.6" width="2.3" height="2.2" fill="#b4b4b4"/></svg><span class="t" style="left:1132.50px;top:598.97px;font-size:12.20px;color:#555;font-weight:bold;transform:scaleX(0.9594);">Statistics</span><svg style="left:1287px;top:598.5px;" width="12" height="13" viewBox="0 0 12 13"><rect x="1.6" y="0" width="2.2" height="9.2" fill="#dedede"/><path d="M-0.1 8.6 H5.5 L2.7 12.7 Z" fill="#dedede"/><rect x="7.9" y="3.6" width="2.2" height="8.8" fill="#dedede"/><path d="M6.2 4.1 H11.8 L9 0 Z" fill="#dedede"/></svg>
<svg style="left:0;top:0" width="1345" height="280" viewBox="0 0 1345 280"><path fill="#fff" d="M662.2 8.7 C662.2 5.2 665 2.4 668.5 2.4 L686 2.4 C686 5.9 683.2 8.7 679.7 8.7 Z"/><path fill="#fff" d="M662.2 9.8 L680.5 9.8 C683.5 9.8 686 12.3 686 15.3 L686 21 C686 24 683.5 26.5 680.5 26.5 L662.2 26.5 C662.2 23 665 20.2 668.5 20.2 L679 20.2 C680.4 20.2 680.8 19.4 680.8 18 C680.8 16.5 680.4 15.7 679 15.7 L668.5 15.7 C665 15.7 662.2 12.9 662.2 9.8 Z"/><g fill="#fff"><rect x="14.7" y="15.5" width="4.2" height="3.9" rx="0.5"/><rect x="16.3" y="19" width="1" height="3"/><rect x="11.5" y="21" width="10.8" height="1"/><rect x="11.5" y="21" width="1" height="2.5"/><rect x="21.3" y="21" width="1" height="2.5"/><rect x="9.9" y="23.1" width="4.1" height="3.8" rx="0.5"/><rect x="14.8" y="23.1" width="4.1" height="3.8" rx="0.5"/><rect x="19.8" y="23.1" width="4.1" height="3.8" rx="0.5"/></g><path d="M10.3 86.7 C12.6 83.7 14.6 82.8 17 82.8 C19.4 82.8 21.4 83.7 23.7 86.7 C21.4 89.7 19.4 90.6 17 90.6 C14.6 90.6 12.6 89.7 10.3 86.7 Z" fill="none" stroke="#b8c7ce" stroke-width="1.3"/><circle cx="17" cy="86.3" r="2.7" fill="#b8c7ce"/><rect x="17.2" y="113.4" width="6.6" height="12.7" fill="#b8c7ce"/><rect x="9.6" y="119.2" width="12.6" height="8.2" fill="#222d32"/><rect x="10" y="119.8" width="11.8" height="7.2" rx="0.9" fill="#b8c7ce"/><path d="M13.2 119.9 V118.3 Q13.2 117.6 14 117.6 H17.8 Q18.6 117.6 18.6 118.3 V119.9" fill="none" stroke="#b8c7ce" stroke-width="1.1"/><rect x="10" y="122.5" width="11.8" height="0.8" fill="#56666e"/><rect x="15" y="122.1" width="1.8" height="1.6" fill="#b8c7ce"/><rect x="11.7" y="148.6" width="11.7" height="11.7" rx="0.8" fill="none" stroke="#b8c7ce" stroke-width="1.4"/><rect x="13.6" y="151.2" width="1.2" height="1.1" fill="#b8c7ce"/><rect x="15.7" y="151.2" width="5.9" height="1.1" fill="#b8c7ce"/><rect x="13.6" y="153.7" width="1.2" height="1.1" fill="#b8c7ce"/><rect x="15.7" y="153.7" width="5.9" height="1.1" fill="#b8c7ce"/><rect x="13.6" y="156.2" width="1.2" height="1.1" fill="#b8c7ce"/><rect x="15.7" y="156.2" width="5.9" height="1.1" fill="#b8c7ce"/><rect x="13.6" y="158.5" width="1.2" height="1.1" fill="#b8c7ce"/><rect x="15.7" y="158.5" width="5.9" height="1.1" fill="#b8c7ce"/><path d="M16.9 181.2 L23.6 192.6 H10.2 Z" fill="#b8c7ce" stroke="#b8c7ce" stroke-width="0.8" stroke-linejoin="round"/><rect x="16.2" y="184.8" width="1.5" height="3.6" fill="#222d32"/><rect x="16.2" y="189.4" width="1.5" height="1.5" fill="#222d32"/><path d="M13.6 214.9 H22.3 L19.3 224 H10.3 Z" fill="#b8c7ce"/><path d="M10.4 224.2 Q10.2 225.8 12 225.8 H19.6 L22.8 216.2" fill="none" stroke="#b8c7ce" stroke-width="0.9"/><rect x="15" y="216.7" width="5" height="0.8" fill="#8a9aa1"/><rect x="14.4" y="218.5" width="5" height="0.8" fill="#8a9aa1"/><path d="M18.8 251.2 H13.4 Q11 251.2 11 253.6 V258.4 Q11 260.8 13.4 260.8 H18.8" fill="none" stroke="#dfe7eb" stroke-width="1.9"/><path d="M15.8 254.3 H20 V251.6 L24.6 256 L20 260.4 V257.7 H15.8 Z" fill="#dfe7eb"/><circle cx="957.2" cy="16" r="4.4" fill="none" stroke="#fff" stroke-width="2.1"/><path d="M960.6 19.4 L963.6 22.2" stroke="#fff" stroke-width="2.6" stroke-linecap="round"/><circle cx="1144.9" cy="16.4" r="3.7" fill="#fff"/><rect x="1143.9" y="11.5" width="2" height="9.8" fill="#fff" transform="rotate(0 1144.9 16.4)"/><rect x="1143.9" y="11.5" width="2" height="9.8" fill="#fff" transform="rotate(45 1144.9 16.4)"/><rect x="1143.9" y="11.5" width="2" height="9.8" fill="#fff" transform="rotate(90 1144.9 16.4)"/><rect x="1143.9" y="11.5" width="2" height="9.8" fill="#fff" transform="rotate(135 1144.9 16.4)"/><circle cx="1144.9" cy="16.4" r="1.6" fill="#00a65a"/><circle cx="1151.6" cy="12.5" r="2.2" fill="#fff"/><rect x="1150.9" y="9.55" width="1.4" height="5.9" fill="#fff" transform="rotate(0 1151.6 12.5)"/><rect x="1150.9" y="9.55" width="1.4" height="5.9" fill="#fff" transform="rotate(60 1151.6 12.5)"/><rect x="1150.9" y="9.55" width="1.4" height="5.9" fill="#fff" transform="rotate(120 1151.6 12.5)"/><circle cx="1151.6" cy="12.5" r="0.75" fill="#00a65a"/><circle cx="1151.6" cy="20.2" r="2.2" fill="#fff"/><rect x="1150.9" y="17.25" width="1.4" height="5.9" fill="#fff" transform="rotate(0 1151.6 20.2)"/><rect x="1150.9" y="17.25" width="1.4" height="5.9" fill="#fff" transform="rotate(60 1151.6 20.2)"/><rect x="1150.9" y="17.25" width="1.4" height="5.9" fill="#fff" transform="rotate(120 1151.6 20.2)"/><circle cx="1151.6" cy="20.2" r="0.75" fill="#00a65a"/><circle cx="1180.9" cy="13.5" r="3.1" fill="#fff"/><path d="M1176 21.8 V19.4 Q1176 16.2 1179 16.2 H1182.9 Q1185.9 16.2 1185.9 19.4 V21.8 Q1185.9 21.9 1185 21.9 H1177 Q1176 21.9 1176 21.8 Z" fill="#fff"/><path d="M1312.6 50.6 L1318.9 45.2 L1325.5 50.6" fill="none" stroke="#fff" stroke-width="1.5" stroke-linecap="round" stroke-linejoin="miter"/><path d="M1313.9 50.8 L1318.9 46.8 L1324.2 50.8 V55 H1319.9 V52.1 H1318.2 V55 H1313.9 Z" fill="#fff"/><rect x="1322" y="45" width="2.2" height="4" fill="#fff"/></svg>
</body></html>
